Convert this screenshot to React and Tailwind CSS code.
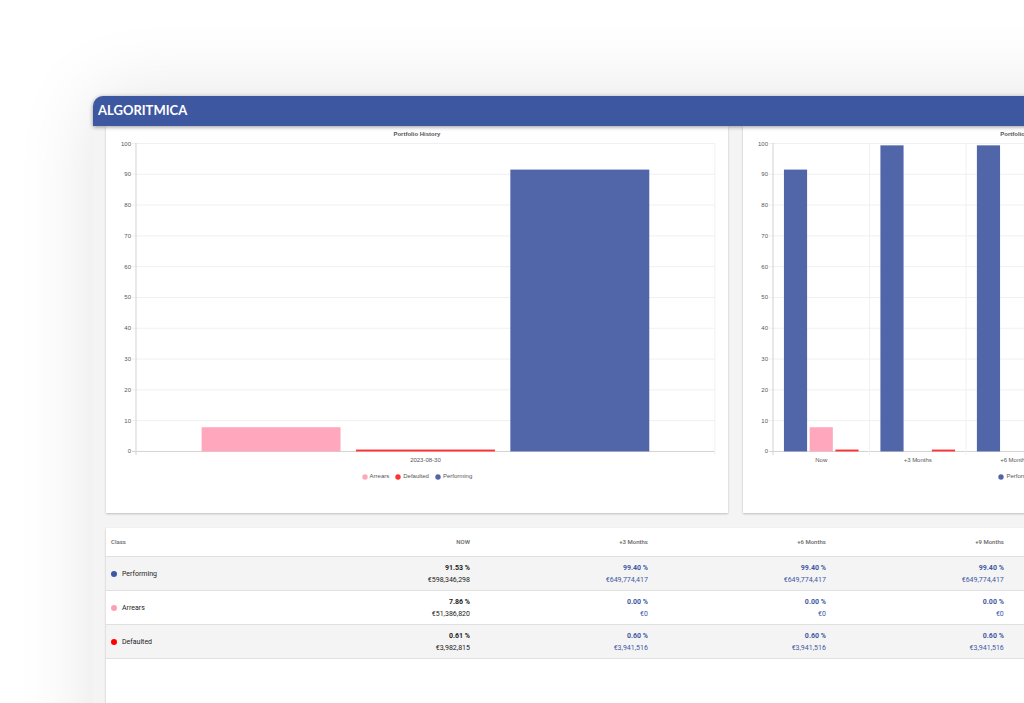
/**
 * Portfolio dashboard - history, forecast and class breakdown
 */

const COLORS = {
  Performing: '#5166a9',
  Arrears: '#ffa7bd',
  Defaulted: '#ff3333',
};

const HISTORY = [
  { label: '2023-08-30', values: { Arrears: 7.86, Defaulted: 0.61, Performing: 91.53 } },
];

const FORECAST = [
  { label: 'Now', values: { Performing: 91.53, Arrears: 7.86, Defaulted: 0.61 } },
  { label: '+3 Months', values: { Performing: 99.4, Arrears: 0, Defaulted: 0.6 } },
  { label: '+6 Months', values: { Performing: 99.4, Arrears: 0, Defaulted: 0.6 } },
  { label: '+9 Months', values: { Performing: 99.4, Arrears: 0, Defaulted: 0.6 } },
  { label: '+12 Months', values: { Performing: 99.4, Arrears: 0, Defaulted: 0.6 } },
  { label: '+15 Months', values: { Performing: 99.4, Arrears: 0, Defaulted: 0.6 } },
];

const PERIODS = ['NOW', '+3 Months', '+6 Months', '+9 Months', '+12 Months', '+15 Months'];

const ROWS = [
  {
    name: 'Performing',
    dot: 'bg-[#3d57a3]',
    now: ['91.53 %', '€598,346,298'],
    next: ['99.40 %', '€649,774,417'],
  },
  {
    name: 'Arrears',
    dot: 'bg-[#ff9fb6]',
    now: ['7.86 %', '€51,386,820'],
    next: ['0.00 %', '€0'],
  },
  {
    name: 'Defaulted',
    dot: 'bg-[#ff0000]',
    now: ['0.61 %', '€3,982,815'],
    next: ['0.60 %', '€3,941,516'],
  },
];

// Plot area inside the 622x321 viewBox
const LEFT = 30;
const RIGHT = 609;
const BASE = 308;
const HEIGHT = 308;

function BarChart({ title, data, series }) {
  const catWidth = (RIGHT - LEFT) / data.length;
  const slot = (catWidth * 0.8) / series.length;
  const barWidth = slot * 0.9;
  const y = (value) => BASE - (value / 100) * HEIGHT;

  return (
    <section className="min-w-0 flex-1 bg-white pb-[23px] font-['Liberation_Sans',Arial,sans-serif] text-[6px] text-[#555555] shadow-[0_1px_2px_rgba(0,0,0,0.22)]">
      <h2 className="text-center leading-[17px] font-bold">{title}</h2>

      <svg viewBox="0 0 622 321" className="block w-full overflow-visible" role="img" aria-label={title}>
        {/* Horizontal grid and scale */}
        {[0, 10, 20, 30, 40, 50, 60, 70, 80, 90, 100].map((tick) => (
          <g key={tick}>
            <line
              x1={LEFT - 4}
              x2={RIGHT}
              y1={y(tick) + 0.5}
              y2={y(tick) + 0.5}
              stroke={tick === 0 ? '#d2d2d2' : '#f0f0f0'}
            />
            <text x={LEFT - 5} y={y(tick) + 2.5} textAnchor="end" fontSize="6" fill="#555555">
              {tick}
            </text>
          </g>
        ))}

        {/* Vertical grid */}
        {[...data, null].map((_, i) => (
          <line
            key={i}
            x1={LEFT + i * catWidth}
            x2={LEFT + i * catWidth}
            y1={0}
            y2={BASE + 4}
            stroke={i === 0 ? '#d2d2d2' : '#f0f0f0'}
          />
        ))}

        {/* Bars */}
        {data.map((item, i) => (
          <g key={item.label}>
            {series.map((name, j) => (
              <rect
                key={name}
                x={LEFT + i * catWidth + catWidth * 0.1 + j * slot + slot * 0.05}
                y={y(item.values[name]) + 0.5}
                width={barWidth}
                height={BASE - y(item.values[name])}
                fill={COLORS[name]}
              />
            ))}
            <text
              x={LEFT + (i + 0.5) * catWidth}
              y={BASE + 11}
              textAnchor="middle"
              fontSize="6"
              fill="#555555"
            >
              {item.label}
            </text>
          </g>
        ))}
      </svg>

      <ul className="flex h-[26px] items-center justify-center gap-[6px]">
        {series.map((name) => (
          <li key={name} className="flex items-center gap-[2px]">
            <svg viewBox="0 0 6 6" className="size-[6px]">
              <circle cx="3" cy="3" r="2.7" fill={COLORS[name]} />
            </svg>
            {name}
          </li>
        ))}
      </ul>
    </section>
  );
}

function ClassTable() {
  return (
    <section className="flex-1 bg-white shadow-[0_1px_2px_rgba(0,0,0,0.22)]">
      <table className="w-full table-fixed border-collapse text-[7px] leading-3 text-[#222222]">
        <thead>
          <tr className="h-[29px] border-b border-[#e0e0e0] text-[6px] text-[#666666]">
            <th scope="col" className="w-[191px] px-[5px] text-left font-medium">
              Class
            </th>
            {PERIODS.map((period) => (
              <th key={period} scope="col" className="px-[5px] text-right font-medium">
                {period}
              </th>
            ))}
          </tr>
        </thead>
        <tbody>
          {ROWS.map((row) => (
            <tr key={row.name} className="h-[34px] border-b border-[#e0e0e0] odd:bg-[#f4f4f4]">
              <th scope="row" className="px-[5px] text-left font-normal">
                <span className="flex items-center gap-[5px]">
                  <span className={`size-[6px] rounded-full ${row.dot}`} />
                  {row.name}
                </span>
              </th>
              {PERIODS.map((period, i) => {
                const [share, amount] = i === 0 ? row.now : row.next;
                return (
                  <td
                    key={period}
                    className={`px-[5px] text-right ${i === 0 ? '' : 'text-[#3d57a3]'}`}
                  >
                    <p className="font-bold">{share}</p>
                    <p>{amount}</p>
                  </td>
                );
              })}
            </tr>
          ))}
        </tbody>
      </table>
    </section>
  );
}

export default function App() {
  return (
    <div className="flex h-screen flex-col overflow-hidden bg-white pt-24 pl-[93px] font-[Roboto,sans-serif]">
      {/* The window runs past the right and bottom edges of the page */}
      <div className="-mb-24 flex w-[138%] flex-1 flex-col rounded-tl-[10px] bg-[#f4f4f4] shadow-[0_0_80px_rgba(0,0,0,0.11)]">
        <header className="relative z-10 flex h-[30px] shrink-0 items-center rounded-tl-[10px] bg-[#3d57a0] px-[5px] pb-[2px] shadow-[0_1px_4px_rgba(0,0,0,0.4)]">
          <span className="font-[Lato,sans-serif] text-[13px] leading-4 font-bold text-white">
            ALGORITMICA
          </span>
        </header>

        <main className="flex flex-1 flex-col gap-[15px] px-[13px]">
          <div className="flex gap-[15px]">
            <BarChart
              title="Portfolio History"
              data={HISTORY}
              series={['Arrears', 'Defaulted', 'Performing']}
            />
            <BarChart
              title="Portfolio Forecast for Next 15 Months"
              data={FORECAST}
              series={['Performing', 'Arrears', 'Defaulted']}
            />
          </div>
          <ClassTable />
        </main>
      </div>
    </div>
  );
}
